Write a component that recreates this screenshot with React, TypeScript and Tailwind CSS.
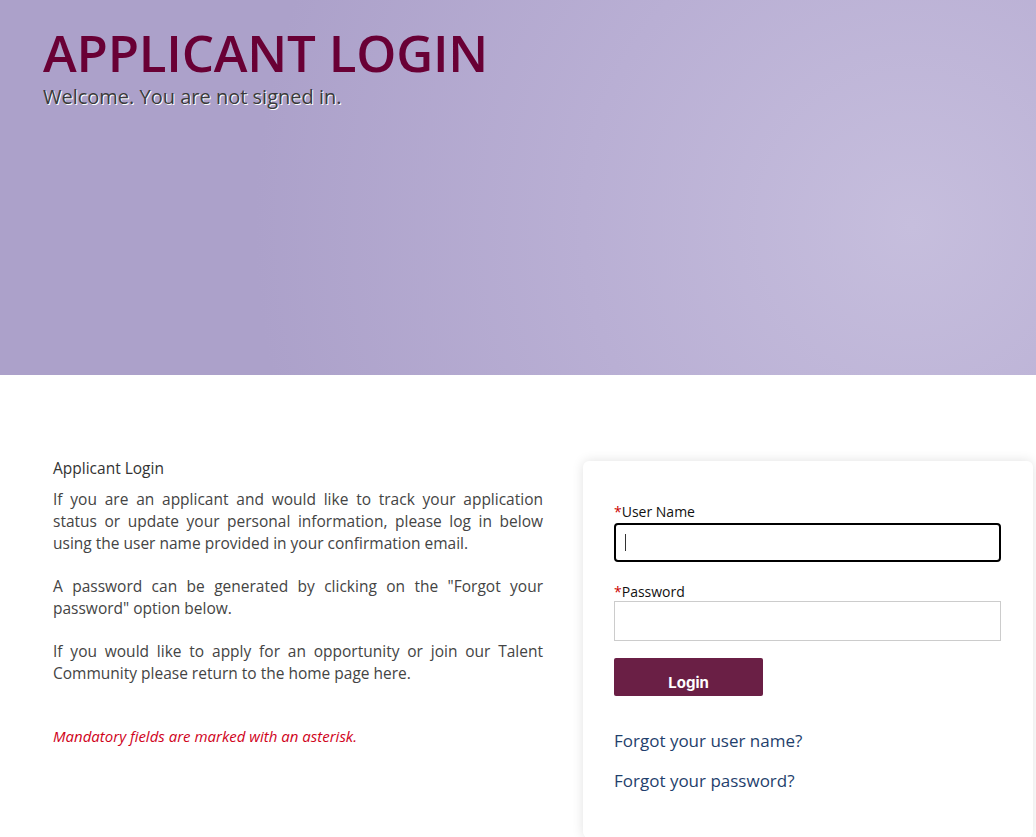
export default function App() {
  return (
    <div className="min-h-[837px] bg-white font-['Open_Sans',sans-serif] text-[#333]">
      <header className="h-[375px] bg-[radial-gradient(circle_at_88%_60%,#c6bedd_0%,#b9afd4_35%,#aca1ca_70%)] px-[43px] pt-[27px]">
        <h1 className="text-[51px] font-semibold leading-[50px] tracking-[-0.2px] text-[#690035]">APPLICANT LOGIN</h1>
        <p className="mt-[7px] text-[20px] leading-[26px] text-[#3a3a3a] [text-shadow:1px_1px_0_#fff]">
          Welcome. You are not signed in.
        </p>
      </header>

      <main className="flex gap-[40px] pl-[53px] pt-[86px]">
        <section className="w-[490px] text-[15.5px] leading-[22px] text-[#444]">
          <h2 className="-mt-[4px] mb-[9px] font-normal text-[#333]">Applicant Login</h2>
          <p className="text-justify">
            If you are an applicant and would like to track your application status or update your personal
            information, please log in below using the user name provided in your confirmation email.
          </p>
          <p className="mt-[21px] text-justify">
            A password can be generated by clicking on the "Forgot your password" option below.
          </p>
          <p className="mt-[21px] text-justify">
            If you would like to apply for an opportunity or join our Talent Community please return to the home
            page here.
          </p>
          <p className="mt-[41px] text-[15px] italic text-[#d0021b]">Mandatory fields are marked with an asterisk.</p>
        </section>

        <section className="w-[450px] rounded-[6px] bg-white px-[31px] pb-[45px] pt-[42px] shadow-[0_0_12px_rgba(0,0,0,0.12)]">
          <label className="block text-[14px] leading-[18px] text-[#111]">
            <span className="text-[#c00]">*</span>User Name
          </label>
          <div className="mt-[2px] flex h-[39px] w-[387px] items-center rounded-[4px] border-2 border-black px-[9px]">
            <span className="h-[17px] w-px bg-[#333]"></span>
          </div>
          <label className="mt-[21px] block text-[14px] leading-[18px] text-[#111]">
            <span className="text-[#c00]">*</span>Password
          </label>
          <div className="h-[40px] w-[387px] border border-[#ccc]"></div>
          <button className="mt-[17px] h-[38px] w-[149px] rounded-[2px] bg-[#6a1f45] pt-[11px] font-['Inter',sans-serif] text-[15px] font-bold leading-[22px] text-white">
            Login
          </button>
          <a className="mt-[33px] block text-[17px] leading-[24px] text-[#1f3f6d]">Forgot your user name?</a>
          <a className="mt-[16px] block text-[17px] leading-[24px] text-[#1f3f6d]">Forgot your password?</a>
        </section>
      </main>
    </div>
  );
}
